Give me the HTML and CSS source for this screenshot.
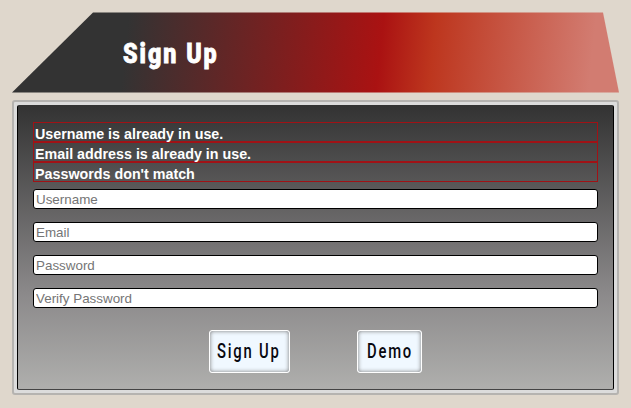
FILE: index.html
```html
<!DOCTYPE html>
<html lang="en">
<head>
<meta charset="utf-8">
<title>Sign Up</title>
<link rel="stylesheet" href="styles.css">
</head>
<body>
<header class="banner"><h1><span class="title">Sign Up</span></h1></header>
<main class="frame">
<form class="panel">
<ul class="errors">
<li><span>Username is already in use.</span></li>
<li><span>Email address is already in use.</span></li>
<li><span>Passwords don't match</span></li>
</ul>
<div class="fields">
<input type="text" placeholder="Username">
<input type="text" placeholder="Email">
<input type="password" placeholder="Password">
<input type="password" placeholder="Verify Password">
</div>
<div class="actions">
<button type="button" class="signup"><span>Sign Up</span></button>
<button type="button" class="demo"><span>Demo</span></button>
</div>
</form>
</main>
</body>
</html>
```
FILE: styles.css
```css
* { box-sizing: border-box; }
body {
  margin: 0;
  padding: 12px 12px 0;
  height: 408px;
  overflow: hidden;
  background: #dfd7cc;
  font-family: "Liberation Sans", Arial, sans-serif;
}
.banner {
  width: 607px;
  height: 81px;
  padding: 24px 0 0 111px;
  background: linear-gradient(96deg, #333 19%, #aa1212 60.5%, #bd361e 69%, #d27c71 95%);
  clip-path: polygon(81px 0.5px, 591px 0.5px, 607px 80.5px, 0 80.5px);
}
h1 { margin: 0; font-size: 28px; line-height: 36px; color: #fff; }
.title {
  display: inline-block;
  font-family: Roboto, sans-serif;
  font-weight: 900;
  letter-spacing: 2.4px;
  -webkit-text-stroke: 0.8px #fff;
  transform: scaleX(.83);
  transform-origin: 0 50%;
}
.frame {
  width: 607px;
  height: 295px;
  margin-top: 7px;
  padding: 3px;
  border: 2px solid #b5b3b0;
  border-radius: 3px;
  background: #dcdcdc;
}
.panel {
  height: 285px;
  padding: 16px 15px 0;
  border: 1px solid;
  border-color: #333 #000 #444 #000;
  border-radius: 2px;
  background: linear-gradient(#333, #8b898a 66%, #afafad);
}
.errors { list-style: none; margin: 0; padding: 0; width: 565px; }
.errors li {
  height: 20px;
  padding-left: 1px;
  border: 1px solid #a01216;
  color: #fff;
  font-size: 15.5px;
  font-weight: bold;
  line-height: 21px;
  white-space: nowrap;
}
.errors span { display: inline-block; transform-origin: 0 50%; transform: scaleX(.922); }
.fields { display: grid; gap: 13px; margin-top: 7px; }
input {
  width: 565px;
  height: 20px;
  margin: 0;
  padding: 0 2px;
  border: 1px solid #000;
  border-radius: 3px;
  background: #fff;
  font: 13.4px "Liberation Sans", Arial, sans-serif;
}
input::placeholder { color: #757575; }
.actions { display: flex; margin: 22px 0 0 176px; gap: 67px; }
button {
  height: 43px;
  padding: 0 0 0 8px;
  border: 1px solid #fff;
  border-radius: 3px;
  background: #f0f8ff;
  box-shadow: inset 0 0 4px #777;
  color: #080810;
  text-align: left;
  font: 500 20px/41px Roboto, sans-serif;
  letter-spacing: 2.4px;
  white-space: nowrap;
}
.signup { width: 81px; padding-left: 7px; }
.demo { width: 65px; padding-left: 9px; }
button span { display: inline-block; transform: scaleX(.74); transform-origin: 0 50%; }
```
